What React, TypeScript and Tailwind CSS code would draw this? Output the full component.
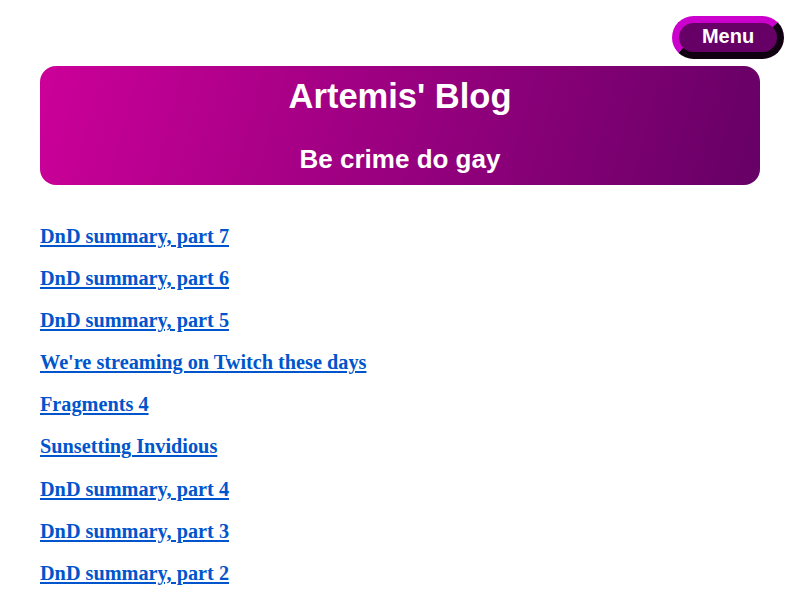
import React from 'react'

const posts = [
    'DnD summary, part 7',
    'DnD summary, part 6',
    'DnD summary, part 5',
    "We're streaming on Twitch these days",
    'Fragments 4',
    'Sunsetting Invidious',
    'DnD summary, part 4',
    'DnD summary, part 3',
    'DnD summary, part 2',
]

export default function App() {
    return (
        <div className="relative min-h-screen bg-white px-10 pt-[66px] font-['Liberation_Sans',Arial,sans-serif]">
            <button className="absolute top-4 right-4 h-[43px] w-[112px] rounded-full border-[7px] border-t-[#cc00cc] border-l-[#cc00cc] border-b-[#110011] border-r-[#110011] bg-[#660066] pb-[3px] text-[20px] leading-none font-bold text-white">
                Menu
            </button>

            <header className="flex h-[119px] flex-col items-center rounded-2xl bg-[linear-gradient(105deg,#cc0099,#660066)] pt-[9px] text-white">
                <h1 className="text-[34.5px] font-bold leading-[42px]">Artemis' Blog</h1>
                <p className="mt-[27px] text-[26px] font-bold leading-[30px]">Be crime do gay</p>
            </header>

            <ul className="mt-[39px] flex flex-col gap-[18.1px] font-['Liberation_Serif','Times_New_Roman',serif] text-[20.25px] leading-[24px] font-bold">
                {posts.map((p, i) => (
                    <li key={i}>
                        <a href="#" className="text-[#0055cc] underline">
                            {p}
                        </a>
                    </li>
                ))}
            </ul>
        </div>
    )
}
